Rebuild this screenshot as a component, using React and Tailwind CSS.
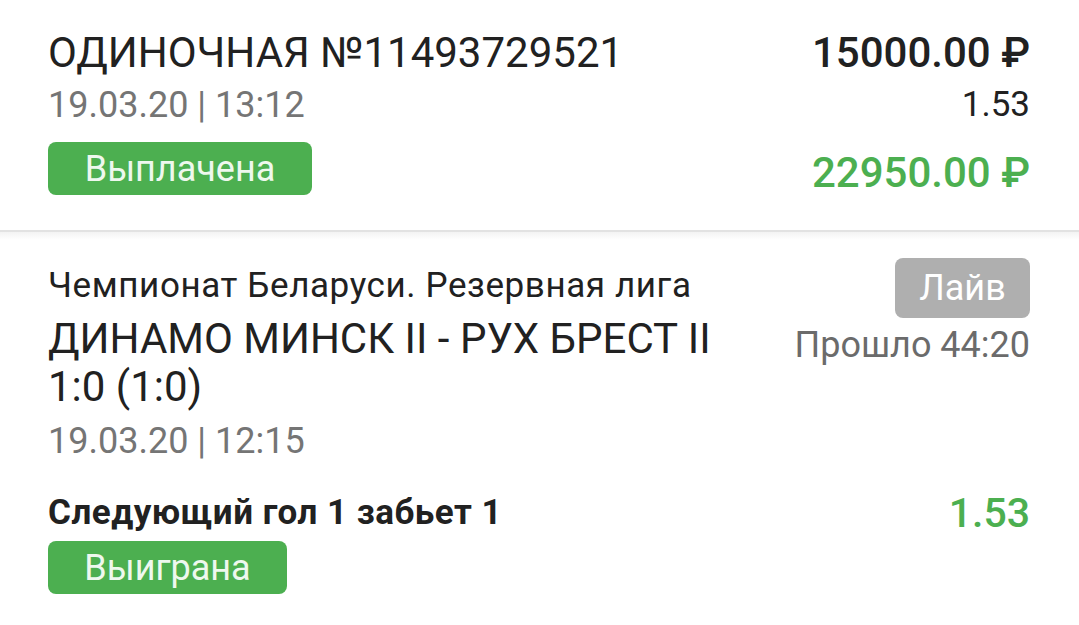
export default function App() {
  return (
    <div className="w-[1079px] h-[625px] bg-white overflow-hidden font-['Roboto',sans-serif] text-[#212121]">
      {/* Bet header */}
      <div className="flex justify-between pl-[48px] pr-[49px] pt-[29px] pb-[33px]">
        <div className="flex flex-col items-start">
          <div className="text-[42px] leading-[48px]">ОДИНОЧНАЯ №11493729521</div>
          <div className="mt-[6px] text-[36px] leading-[44px] text-[#757575]">19.03.20 | 13:12</div>
          <div className="mt-[15px] h-[53px] w-[264px] rounded-[8px] bg-[#4caf50] flex items-center justify-center text-[36px] text-[#eef8ee]">
            Выплачена
          </div>
        </div>
        <div className="flex flex-col items-end">
          <div className="text-[42px] leading-[48px] font-medium">15000.00 ₽</div>
          <div className="mt-[6px] text-[35px] leading-[44px]">1.53</div>
          <div className="mt-[22px] text-[42px] leading-[48px] font-medium text-[#4caf50]">22950.00 ₽</div>
        </div>
      </div>

      {/* Divider */}
      <div className="h-[2px] bg-[#e2e2e2]" />
      <div className="h-[8px] bg-linear-to-b from-[#f3f3f3] to-white" />

      {/* Event */}
      <div className="pl-[48px] pr-[49px] pt-[18px]">
        <div className="flex justify-between gap-[40px]">
          <div className="flex-1 mt-[8px]">
            <div className="text-[35px] leading-[40px] tracking-[0.6px]">Чемпионат Беларуси. Резервная лига</div>
            <div className="mt-[9px] text-[42px] leading-[48px]">ДИНАМО МИНСК II - РУХ БРЕСТ II 1:0 (1:0)</div>
            <div className="mt-[8px] text-[36px] leading-[44px] text-[#757575]">19.03.20 | 12:15</div>
          </div>
          <div className="flex flex-col items-end shrink-0">
            <div className="h-[60px] w-[135px] rounded-[8px] bg-[#afafaf] flex items-center justify-center text-[36px] text-white">
              Лайв
            </div>
            <div className="mt-[7px] text-[36px] leading-[40px] text-[#6b6b6b]">Прошло 44:20</div>
          </div>
        </div>

        <div className="mt-[30px] flex justify-between items-end">
          <div className="text-[35px] leading-[40px] font-bold tracking-[0.5px]">Следующий гол 1 забьет 1</div>
          <div className="text-[41px] leading-[40px] font-medium text-[#4caf50]">1.53</div>
        </div>
        <div className="mt-[8px] h-[53px] w-[239px] rounded-[8px] bg-[#4caf50] flex items-center justify-center text-[36px] text-[#eef8ee]">
          Выиграна
        </div>
      </div>
    </div>
  );
}
